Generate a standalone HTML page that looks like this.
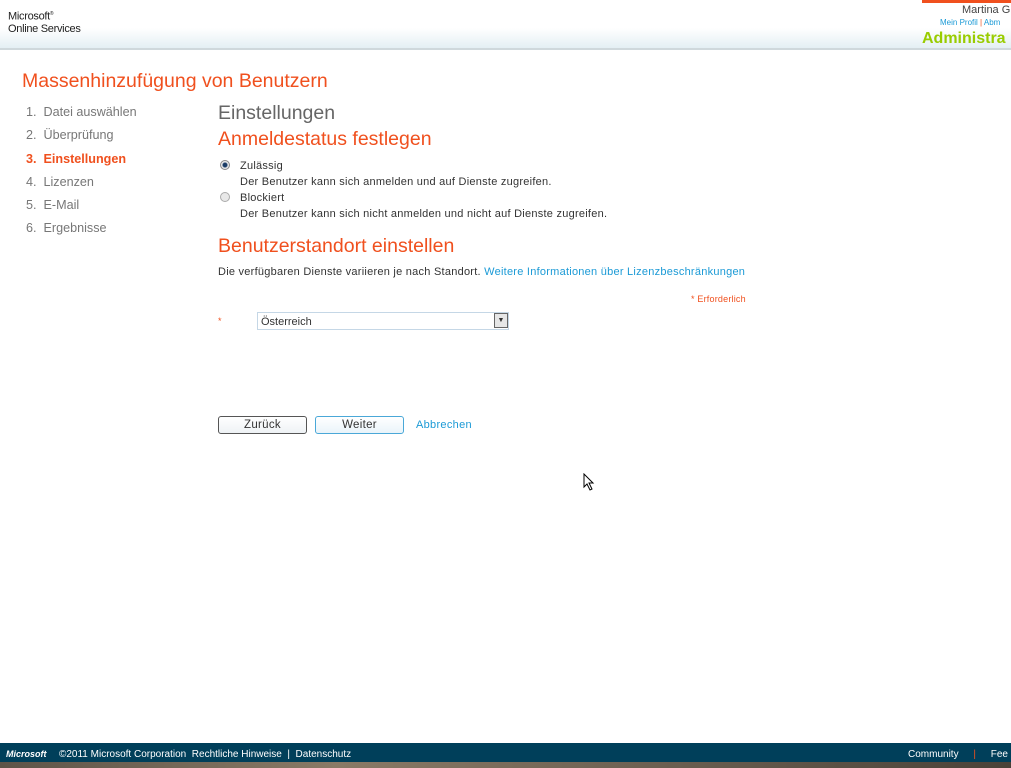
<!DOCTYPE html>
<html><head><meta charset="utf-8"><style>
*{margin:0;padding:0;box-sizing:border-box}
body{width:1011px;height:768px;overflow:hidden;position:relative;background:#fff;font-family:"Liberation Sans",sans-serif;font-size:11px;color:#333}
.a{position:absolute;white-space:nowrap}
.or{color:#f0501e}
.lnk{color:#1b9ad6}
</style></head><body>
<div class="a" style="left:0;top:0;width:1011px;height:50px;background:linear-gradient(#fff 0,#fff 28px,#e4eff4 48px);border-bottom:2px solid #cfd8dc"></div>
<div class="a" style="left:8px;top:8px;font-size:11px;color:#222;line-height:12px;letter-spacing:-0.3px">Microsoft<sup style="font-size:5px">®</sup><br>Online Services</div>
<div class="a" style="left:922px;top:0;width:89px;height:3px;background:#f0501e"></div>
<div class="a" style="left:962px;top:4px;font-size:11px;color:#444">Martina G</div>
<div class="a lnk" style="left:940px;top:18px;font-size:8px">Mein Profil <span style="color:#f0501e">|</span> Abm</div>
<div class="a" style="left:922px;top:30px;font-size:16px;font-weight:bold;color:#99cc00">Administra</div>

<div class="a or" style="left:22px;top:70px;font-size:19.5px">Massenhinzufügung von Benutzern</div>
<div class="a" style="left:26px;top:101px;font-size:12.6px;color:#777;line-height:23.3px">1.&nbsp; Datei auswählen<br>2.&nbsp; Überprüfung<br><b style="color:#f0501e">3.&nbsp; Einstellungen</b><br>4.&nbsp; Lizenzen<br>5.&nbsp; E-Mail<br>6.&nbsp; Ergebnisse</div>

<div class="a" style="left:218px;top:102px;font-size:19.5px;color:#666">Einstellungen</div>
<div class="a or" style="left:218px;top:128px;font-size:19.5px">Anmeldestatus festlegen</div>
<div class="a" style="left:220px;top:160px;width:10px;height:10px;border-radius:50%;border:1px solid #888;background:radial-gradient(#1a3c66 0,#1a3c66 2px,#e8e8e8 3px)"></div>
<div class="a" style="left:240px;top:158px;font-size:11px;line-height:16px;letter-spacing:0.25px">Zulässig<br>Der Benutzer kann sich anmelden und auf Dienste zugreifen.</div>
<div class="a" style="left:220px;top:192px;width:10px;height:10px;border-radius:50%;border:1px solid #aaa;background:#e8e8e8"></div>
<div class="a" style="left:240px;top:190px;font-size:11px;line-height:16px;letter-spacing:0.25px">Blockiert<br>Der Benutzer kann sich nicht anmelden und nicht auf Dienste zugreifen.</div>
<div class="a or" style="left:218px;top:235px;font-size:19.5px">Benutzerstandort einstellen</div>
<div class="a" style="left:218px;top:266px;font-size:11px;letter-spacing:0.25px">Die verfügbaren Dienste variieren je nach Standort. <span class="lnk">Weitere Informationen über Lizenzbeschränkungen</span></div>
<div class="a or" style="left:691px;top:294px;font-size:9px;letter-spacing:0.2px">* Erforderlich</div>
<div class="a or" style="left:218px;top:316px;font-size:9px">*</div>
<div class="a" style="left:257px;top:312px;width:252px;height:18px;border:1px solid #c5d7e6;padding:3px 0 0 3px;font-size:11px">Österreich</div>
<div class="a" style="left:494px;top:313px;width:14px;height:15px;border:1px solid #666;background:#e6e6e6;font-size:7px;text-align:center;line-height:14px">▼</div>
<div class="a" style="left:218px;top:416px;width:89px;height:18px;border:1px solid #555;border-radius:3px;background:linear-gradient(#fff,#eef2f5);text-align:center;font-size:11.5px;line-height:16px;letter-spacing:0.3px">Zurück</div>
<div class="a" style="left:315px;top:416px;width:89px;height:18px;border:1px solid #4aa8d8;border-radius:3px;background:linear-gradient(#fff,#eaf4fa);text-align:center;font-size:11.5px;line-height:16px;letter-spacing:0.3px">Weiter</div>
<div class="a lnk" style="left:416px;top:419px;font-size:11px;letter-spacing:0.3px">Abbrechen</div>
<svg class="a" style="left:583px;top:473px" width="12" height="18"><path d="M1 1 L1 14 L4 11 L7 17 L9 16 L6 10 L10 10 Z" fill="#fff" stroke="#000"/></svg>

<div class="a" style="left:0;top:743px;width:1011px;height:19px;background:#003f5a"></div>
<div class="a" style="left:6px;top:749px;font-size:9px;font-weight:bold;font-style:italic;color:#fff">Microsoft</div>
<div class="a" style="left:59px;top:749px;font-size:10px;color:#fff">©2011 Microsoft Corporation&nbsp; Rechtliche Hinweise &nbsp;|&nbsp; Datenschutz</div>
<div class="a" style="left:908px;top:749px;font-size:10px;color:#fff">Community <span style="color:#f0501e;margin:0 12px">|</span> Fee</div>
<div class="a" style="left:0;top:762px;width:1011px;height:6px;background:linear-gradient(90deg,#5e5448,#8a7a66,#6a5e50,#4a4238)"></div>
</body></html>
